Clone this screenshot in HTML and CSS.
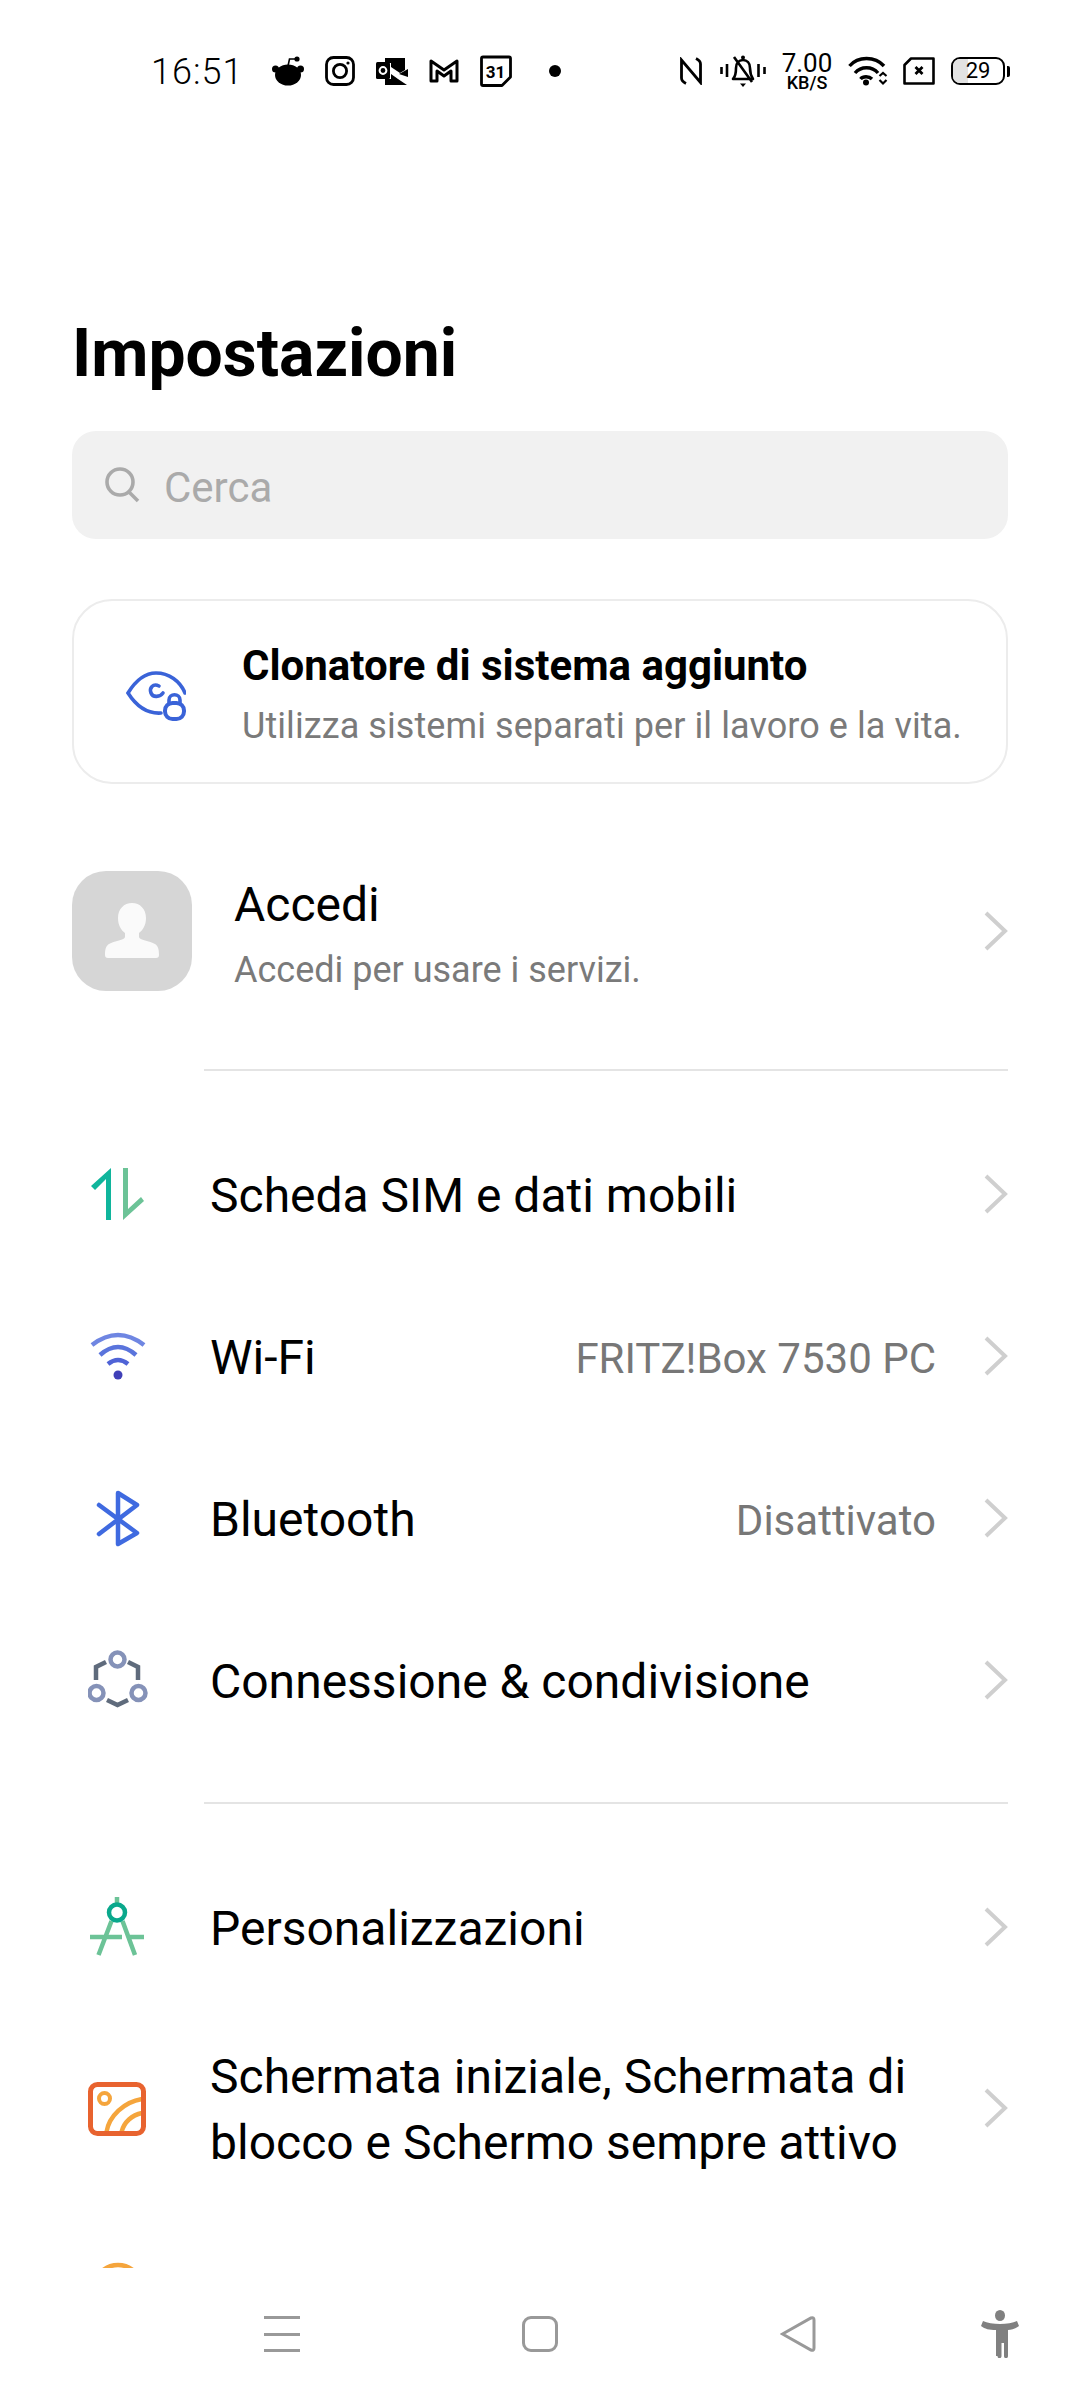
FILE: index.html
```html
<!DOCTYPE html>
<html lang="it">
<head>
  <meta charset="UTF-8">
  <meta name="viewport" content="width=device-width, initial-scale=1.0">
  <title>Impostazioni</title>
  <link rel="stylesheet" href="styles.css">
</head>
<body>
  <div class="screen">
    <!-- Status bar -->
    <div class="status-bar">
      <span class="time">16:51</span>
      <svg class="st-reddit" width="32" height="30" viewBox="0 0 32 30"><ellipse cx="16" cy="19" rx="13" ry="10.5"/><circle cx="3.5" cy="13" r="3.5"/><circle cx="28.5" cy="13" r="3.5"/><circle cx="25" cy="3" r="2.6"/><path d="M16 10 L17.5 3 H24" fill="none" stroke="#000" stroke-width="1.6"/></svg>
      <svg class="st-insta" width="30" height="30" viewBox="0 0 30 30" fill="none" stroke="#000" stroke-width="2.8"><rect x="1.5" y="1.5" width="27" height="27" rx="7"/><circle cx="15" cy="15" r="6.6"/><circle cx="23" cy="7" r="1.6" fill="#000" stroke="none"/></svg>
      <svg class="st-outlook" width="32" height="30" viewBox="0 0 32 30"><path d="M9 2 H29 V14 L24 17 L15 11 V7 H9 Z"/><path d="M9 23 H15 V18 L22 23 L31 29 H9 Z"/><path d="M23 18 L32 13 V21 Z"/><rect x="0" y="6" width="14" height="17" rx="1.5"/><circle cx="7" cy="14.5" r="3.4" fill="none" stroke="#fff" stroke-width="2"/></svg>
      <svg class="st-gmail" width="30" height="30" viewBox="0 0 30 30"><path d="M2 5 L15 14 L28 5 V25 H22 V15 L15 20 L8 15 V25 H2 Z" fill="none" stroke="#000" stroke-width="3" stroke-linejoin="round"/></svg>
      <svg class="st-cal" width="32" height="32" viewBox="0 0 32 32"><path d="M3 2 H29 a1.5 1.5 0 0 1 1.5 1.5 V22 L22 30.5 H3 a1.5 1.5 0 0 1 -1.5 -1.5 V3.5 A1.5 1.5 0 0 1 3 2 Z" fill="none" stroke="#000" stroke-width="2.8" stroke-linejoin="round"/><text x="15.5" y="22.5" class="cal-num" text-anchor="middle">31</text></svg>
      <span class="st-dot"></span>

      <svg class="st-nfc" width="22" height="28" viewBox="0 0 22 28" fill="none" stroke="#000" stroke-width="2.8"><path d="M6 26.5 C3 25 1.5 23.5 1.5 21 V3 L20.5 25.5 V7 C20.5 4.5 19 3 16 1.5"/></svg>
      <svg class="st-bell" width="46" height="34" viewBox="0 0 46 34" fill="none" stroke="#000"><path d="M1.5 13 V20 M7 10 V23 M38.5 10 V23 M44.5 13 V20" stroke-width="2.6"/><path d="M13 25 C16 22 16 18 16 14 C16 9 19 6 23 6 C27 6 30 9 30 14 C30 18 31 22 33 25 Z M14 3 L32 28" stroke-width="2.6" stroke-linejoin="round"/><path d="M20 29.5 H26 L23 33 Z" fill="#000" stroke="none"/><circle cx="23" cy="3.5" r="2" fill="#000" stroke="none"/></svg>
      <div class="speed"><span class="speed-num">7.00</span><span class="speed-unit">KB/S</span></div>
      <svg class="st-wifi" width="40" height="30" viewBox="0 0 40 30" fill="none" stroke="#000" stroke-width="3.4"><path d="M1.5 10 C10 0 27 0 36 10"/><path d="M7 17 C13 10 24 10 30 17"/><path d="M12.5 23 C15 20 21 20 24 23"/><circle cx="18" cy="26.5" r="3" fill="#000" stroke="none"/><path d="M31.5 20 L35 17 L38.5 20 M31.5 24 L35 27.5 L38.5 24" stroke-width="2.2"/></svg>
      <svg class="st-sim" width="32" height="28" viewBox="0 0 32 28" fill="none" stroke="#000" stroke-width="2.6"><path d="M8 1.5 H30.5 V26.5 H1.5 V8 Z" stroke-linejoin="round"/><path d="M12.5 10 L19.5 17 M19.5 10 L12.5 17" stroke-width="2.8"/></svg>
      <div class="battery"><div class="battery-body"><span class="battery-fill"></span><span class="battery-num">29</span></div><span class="battery-cap"></span></div>
    </div>

    <!-- Scrolling list -->
    <div class="content">
      <h1 class="page-title">Impostazioni</h1>

      <div class="search">
        <svg width="36" height="36" viewBox="0 0 36 36" fill="none" stroke="#aaa" stroke-width="3.6"><circle cx="16" cy="15" r="13"/><path d="M25 25 L34 34"/></svg>
        <span class="search-text">Cerca</span>
      </div>

      <div class="clone-card">
        <svg class="clone-icon" width="60" height="50" viewBox="0 0 60 50" fill="none" stroke="#3a63d8" stroke-width="3.6" stroke-linecap="round"><path d="M35 42 C20 43 9 33 2 22 C10 9 20 2 30 2 C43 2 54 10 59 22"/><path d="M33 15 C27 12 23 17 25 22 C27 27 34 26 37 22"/><path d="M43 33 V29 C43 22 54 22 54 29 V33" fill="#fff"/><rect x="39" y="32" width="19" height="16" rx="7.5" fill="#fff" stroke-width="4"/></svg>
        <div class="clone-text">
          <div class="clone-title">Clonatore di sistema aggiunto</div>
          <div class="clone-sub">Utilizza sistemi separati per il lavoro e la vita.</div>
        </div>
      </div>

      <div class="profile">
        <div class="avatar">
          <svg width="54" height="56" viewBox="0 0 54 56" fill="#fafafa"><path d="M27 0 C35 0 41 6 41 15 C41 22 38 27 34 30 V34 C34 37 45 38 50 41 C53 43 54 46 54 52 C54 54 53 55 51 55 H3 C1 55 0 54 0 52 C0 46 1 43 4 41 C9 38 20 37 20 34 V30 C16 27 13 22 13 15 C13 6 19 0 27 0 Z"/></svg>
        </div>
        <div class="profile-text">
          <div class="profile-name">Accedi</div>
          <div class="profile-sub">Accedi per usare i servizi.</div>
        </div>
        <svg class="chevron" width="24" height="40" viewBox="0 0 24 40"><path d="M2 2 L21 20 L2 38"/></svg>
      </div>

      <div class="divider"></div>

      <div class="group">
        <div class="row">
          <svg class="row-icon" width="60" height="60" viewBox="0 0 60 60"><polygon points="7,26 3,22 23,4 23,56 18,56 18,15" fill="#10b59c"/><polygon points="35,4 40,4 40,45 53,33 56,37 35,56" fill="#6cc397"/></svg>
          <span class="row-label">Scheda SIM e dati mobili</span>
          <svg class="chevron" width="24" height="40" viewBox="0 0 24 40"><path d="M2 2 L21 20 L2 38"/></svg>
        </div>
        <div class="row">
          <svg class="row-icon" width="60" height="60" viewBox="0 0 60 60" fill="none" stroke-width="4.5"><path d="M4 19 Q30 -1 56 19" stroke="#6f86e2"/><path d="M12 29 Q30 13 48 29" stroke="#5a74dc"/><path d="M20 38 Q30 30 40 38" stroke="#4f63d6"/><circle cx="30" cy="49" r="4.5" fill="#4040b8"/></svg>
          <span class="row-label">Wi-Fi</span>
          <span class="row-value">FRITZ!Box 7530 PC</span>
          <svg class="chevron" width="24" height="40" viewBox="0 0 24 40"><path d="M2 2 L21 20 L2 38"/></svg>
        </div>
        <div class="row">
          <svg class="row-icon" width="60" height="60" viewBox="0 0 60 60" fill="none" stroke="#3f6ae0" stroke-width="4.5" stroke-linejoin="round" stroke-linecap="round"><path d="M11 17 L49 45 L30 56 V5 L49 17 L11 46"/></svg>
          <span class="row-label">Bluetooth</span>
          <span class="row-value">Disattivato</span>
          <svg class="chevron" width="24" height="40" viewBox="0 0 24 40"><path d="M2 2 L21 20 L2 38"/></svg>
        </div>
        <div class="row">
          <svg class="row-icon" width="60" height="60" viewBox="0 0 60 60" fill="none" stroke-width="4.5"><path d="M18 12 L8 17 V30 M40 12 L50 17 V30 M19 50 L29.5 55 L40 50" stroke="#5f6b7c"/><circle cx="29.5" cy="9.5" r="7" stroke="#8592b8"/><circle cx="8.5" cy="43" r="7" stroke="#8592b8"/><circle cx="50.5" cy="43" r="7" stroke="#8592b8"/></svg>
          <span class="row-label">Connessione &amp; condivisione</span>
          <svg class="chevron" width="24" height="40" viewBox="0 0 24 40"><path d="M2 2 L21 20 L2 38"/></svg>
        </div>
      </div>

      <div class="divider"></div>

      <div class="group">
        <div class="row">
          <svg class="row-icon" width="60" height="60" viewBox="0 0 60 60" fill="none" stroke-width="4.5"><path d="M29 0 V7 M23.5 24 L10.5 58 M34.5 24 L47 58 M2 40 H34 M41 40 H56" stroke="#6cc397"/><circle cx="29" cy="15.5" r="8" stroke="#0aa88c"/></svg>
          <span class="row-label">Personalizzazioni</span>
          <svg class="chevron" width="24" height="40" viewBox="0 0 24 40"><path d="M2 2 L21 20 L2 38"/></svg>
        </div>
        <div class="row row-tall">
          <svg class="row-icon" width="60" height="60" viewBox="0 0 60 60" fill="none"><path d="M18.5 54 C21 38 36 24 54 21 M33.5 54 C36 44 44 37 54 35" stroke="#f5a53c" stroke-width="4.5"/><circle cx="16.5" cy="20.5" r="5.5" stroke="#f5a53c" stroke-width="4"/><rect x="2.5" y="6.5" width="53" height="49" rx="7" stroke="#e8632f" stroke-width="5"/></svg>
          <span class="row-label">Schermata iniziale, Schermata di<br>blocco e Schermo sempre attivo</span>
          <svg class="chevron" width="24" height="40" viewBox="0 0 24 40"><path d="M2 2 L21 20 L2 38"/></svg>
        </div>
        <div class="row">
          <svg class="row-icon" width="60" height="60" viewBox="0 0 60 60" fill="none"><circle cx="30" cy="30" r="24" stroke="#f5a53c" stroke-width="4.5"/></svg>
        </div>
      </div>
    </div>

    <!-- Navigation bar -->
    <div class="nav-bar">
      <div class="nav-menu"><span></span><span></span><span></span></div>
      <div class="nav-home"></div>
      <svg class="nav-back" width="36" height="36" viewBox="0 0 36 36"><path d="M2.5 18 L31 2 Q34 1 34 4 V32 Q34 35 31 34 Z"/></svg>
      <svg class="nav-person" width="38" height="48" viewBox="0 0 38 48"><ellipse cx="19" cy="5.5" rx="5" ry="5.5"/><path d="M2 11 C10 15 28 15 36 11 L38 16 C34 19 30 20 27 20 V46 C27 49 23 49 23 46 V33 H20.5 V46 C20.5 49 16.5 49 16.5 46 H15 V20 C8 20 4 19 0 16 Z"/></svg>
    </div>
  </div>
</body>
</html>
```

FILE: styles.css
```css
* {
  box-sizing: border-box;
}

html, body {
  margin: 0;
  padding: 0;
  background: #fff;
}

body {
  font-family: Roboto, "Noto Sans", sans-serif;
  color: #000;
}

.screen {
  width: 1080px;
  height: 2400px;
  display: flex;
  flex-direction: column;
  overflow: hidden;
  background: #fff;
}

/* status bar */
.status-bar {
  height: 110px;
  flex: none;
  display: flex;
  align-items: center;
  padding: 0 0 0 151px;
  margin-top: 16px;
  margin-bottom: -16px;
}

.time {
  font-family: Roboto, sans-serif;
  font-size: 36px;
  font-weight: 300;
  letter-spacing: 1px;
  width: 121px;
  padding-top: 2px;
}

.st-insta { margin-left: 21px; }
.st-outlook { margin-left: 21px; }
.st-gmail { margin-left: 21px; }
.st-cal { margin-left: 21px; }

.cal-num {
  font-family: Roboto, sans-serif;
  font-size: 17px;
  font-weight: 700;
}

.st-dot {
  width: 12px;
  height: 12px;
  border-radius: 50%;
  background: #000;
  margin-left: 37px;
}

.st-nfc { margin-left: 119px; }
.st-bell { margin-left: 18px; }

.speed {
  display: flex;
  flex-direction: column;
  align-items: center;
  width: 50px;
  margin-left: 16px;
  line-height: 1;
}

.speed-num {
  font-size: 26px;
  height: 23px;
  line-height: 23px;
}

.speed-unit {
  font-size: 18px;
  font-weight: 500;
  height: 16px;
  line-height: 16px;
}

.st-wifi { margin-left: 16px; }
.st-sim { margin-left: 15px; }

.battery {
  display: flex;
  align-items: center;
  margin-left: 16px;
}

.battery-body {
  width: 54px;
  height: 28px;
  border: 2.6px solid #000;
  border-radius: 9px;
  display: flex;
  align-items: center;
  justify-content: center;
  position: relative;
  overflow: hidden;
}

.battery-fill {
  position: absolute;
  left: 0;
  top: 0;
  bottom: 0;
  width: 29%;
  background: #e2e2e2;
}

.battery-num {
  position: relative;
  font-size: 22px;
  line-height: 1;
}

.battery-cap {
  width: 3px;
  height: 11px;
  margin-left: 2px;
  background: #000;
  border-radius: 0 2px 2px 0;
}

/* content */
.content {
  flex: 1;
  min-height: 0;
  overflow: hidden;
  padding: 0 72px;
}

.page-title {
  margin: 204px 0 0;
  font-size: 66px;
  line-height: 80px;
  font-weight: 700;
}

.search {
  height: 108px;
  margin-top: 37px;
  padding-left: 32px;
  display: flex;
  align-items: center;
  gap: 24px;
  background: #f1f1f1;
  border-radius: 24px;
  font-size: 42px;
  color: #aaa;
}

.search-text {
  padding-top: 4px;
}

.clone-card {
  height: 185px;
  margin-top: 60px;
  padding-left: 52px;
  display: flex;
  align-items: center;
  border: 2px solid #ececec;
  border-radius: 40px;
}

.clone-icon {
  flex: none;
  margin-top: 8px;
}

.clone-text {
  margin-left: 56px;
  padding-top: 4px;
}

.clone-title {
  font-size: 42px;
  line-height: 56px;
  font-weight: 700;
}

.clone-sub {
  margin-top: 8px;
  font-size: 36px;
  line-height: 48px;
  letter-spacing: 0.08px;
  color: #7a7a7a;
}

.profile {
  margin-top: 87px;
  display: flex;
  align-items: center;
}

.avatar {
  width: 120px;
  height: 120px;
  flex: none;
  display: flex;
  align-items: center;
  justify-content: center;
  background: #d6d6d6;
  border-radius: 34px;
}

.profile-text {
  flex: 1;
  margin-left: 42px;
  padding-top: 6px;
}

.profile-name {
  font-size: 48px;
  line-height: 56px;
}

.profile-sub {
  margin-top: 16px;
  font-size: 36px;
  line-height: 42px;
  color: #7a7a7a;
}

.chevron {
  flex: none;
  fill: none;
  stroke: #cfcfcf;
  stroke-width: 4;
}

.divider {
  height: 2px;
  margin: 78px 0 0 132px;
  background: #e4e4e4;
}

.group {
  margin-top: 42px;
}

.group + .divider {
  margin-top: 41px;
}

.row {
  height: 162px;
  padding-left: 16px;
  display: flex;
  align-items: center;
}

.row-tall {
  height: 200px;
}

.row-icon {
  flex: none;
}

.row-label {
  flex: 1;
  margin-left: 62px;
  padding-top: 4px;
  font-size: 48px;
  line-height: 66px;
}

.row-value {
  margin-right: 48px;
  padding-top: 4px;
  font-size: 42px;
  color: #777;
}

/* navigation bar */
.nav-bar {
  height: 132px;
  flex: none;
  display: flex;
  align-items: center;
  padding: 0 0 0 264px;
  background: #fff;
}

.nav-menu {
  width: 36px;
  height: 36px;
  display: flex;
  flex-direction: column;
  justify-content: space-between;
}

.nav-menu span {
  height: 3px;
  background: #999;
}

.nav-home {
  width: 36px;
  height: 36px;
  margin-left: 222px;
  border: 3px solid #999;
  border-radius: 9px;
}

.nav-back {
  margin-left: 222px;
  fill: none;
  stroke: #999;
  stroke-width: 3;
}

.nav-person {
  margin-left: 165px;
  fill: #808080;
}
```
